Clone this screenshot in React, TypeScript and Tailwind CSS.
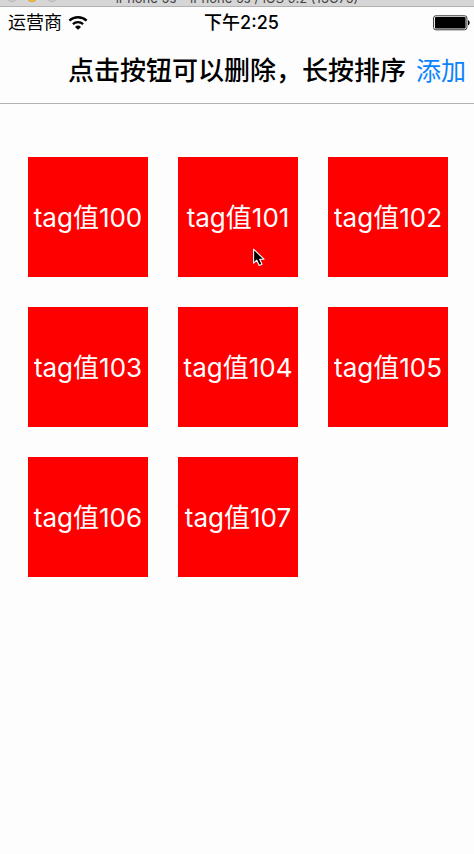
import { useState } from "react";

const initialTags = [100, 101, 102, 103, 104, 105, 106, 107];

function WifiIcon() {
  return (
    <svg className="h-4 w-5" viewBox="0 0 20 16" fill="none" stroke="#000" aria-label="Wi-Fi" role="img">
      <path d="M1.4 5.7A12.5 12.5 0 0 1 18.6 5.7" strokeWidth="2.3" />
      <path d="M4.9 9.1A7.6 7.6 0 0 1 15.1 9.1" strokeWidth="2.3" />
      <path d="M10 14.8L7 11.9A4.4 4.4 0 0 1 13 11.9Z" fill="#000" stroke="none" />
    </svg>
  );
}

function BatteryIcon() {
  return (
    <svg className="h-4 w-[38px]" viewBox="0 0 38 16" aria-label="Battery" role="img">
      <rect x="0.6" y="0.8" width="33.3" height="14" rx="2.2" fill="#fff" stroke="#333" strokeWidth="1" />
      <rect x="2" y="2.1" width="30.6" height="11.4" rx="0.8" fill="#000" />
      <path d="M35 5.3C37.2 5.7 37.2 9.9 35 10.3Z" fill="#000" />
    </svg>
  );
}

function Pointer() {
  return (
    <svg className="pointer-events-none absolute left-[75px] top-[91px] h-5 w-3" viewBox="0 0 12 20" aria-hidden="true">
      <path
        d="M0.6 1.2V15.2L3.8 12.2L6.2 17.4L9 16.2L6.7 11.2H11Z"
        fill="#000"
        stroke="#fff"
        strokeWidth="1.1"
        strokeLinejoin="round"
      />
    </svg>
  );
}

export default function App() {
  const [tags, setTags] = useState(initialTags);

  const addTag = () => setTags([...tags, Math.max(99, ...tags) + 1]);
  const removeTag = (tag: number) => setTags(tags.filter((t) => t !== tag));

  return (
    <div className="min-h-screen bg-[#fdfdfd] font-[Inter,'Noto_Sans_CJK_SC',sans-serif] text-black">
      <div className="relative flex h-[7px] items-end justify-center overflow-hidden border-b border-[#b1b1b1] bg-[#d6d6d6]">
        <div className="absolute bottom-1 left-1.5 flex gap-2">
          <span className="size-3 rounded-full border border-[#b5b5b5] bg-[#cfcfcf]" />
          <span className="size-3 rounded-full border border-[#dfa023] bg-[#ffbd2e]" />
          <span className="size-3 rounded-full border border-[#b5b5b5] bg-[#cfcfcf]" />
        </div>
        <p className="whitespace-nowrap text-[13px] leading-4 text-[#444]">iPhone 5s – iPhone 5s / iOS 9.2 (13C75)</p>
      </div>

      <div className="grid h-8 grid-cols-3 items-center pl-2 pr-[3px] text-lg leading-8">
        <div className="flex items-center gap-1.5">
          <span>运营商</span>
          <WifiIcon />
        </div>
        <time className="pl-1 text-center font-medium">下午2:25</time>
        <div className="flex justify-end">
          <BatteryIcon />
        </div>
      </div>

      <header className="flex h-[65px] items-center justify-end gap-2.5 border-b border-[#b2b2b2] pr-2 leading-8">
        <h1 className="whitespace-nowrap text-[26px] font-medium">点击按钮可以删除，长按排序</h1>
        <button type="button" onClick={addTag} className="whitespace-nowrap text-[25px] text-[#0b83ff]">
          添加
        </button>
      </header>

      <main className="flex flex-wrap gap-[30px] pl-7 pt-[53px]">
        {tags.map((tag) => (
          <div key={tag} className="relative">
            <button
              type="button"
              onClick={() => removeTag(tag)}
              className="flex size-[120px] items-center justify-center whitespace-nowrap bg-[#ff0000] pt-0.5 text-[26px] leading-8 text-white"
            >
              tag值{tag}
            </button>
            {tag === 101 && <Pointer />}
          </div>
        ))}
      </main>
    </div>
  );
}
